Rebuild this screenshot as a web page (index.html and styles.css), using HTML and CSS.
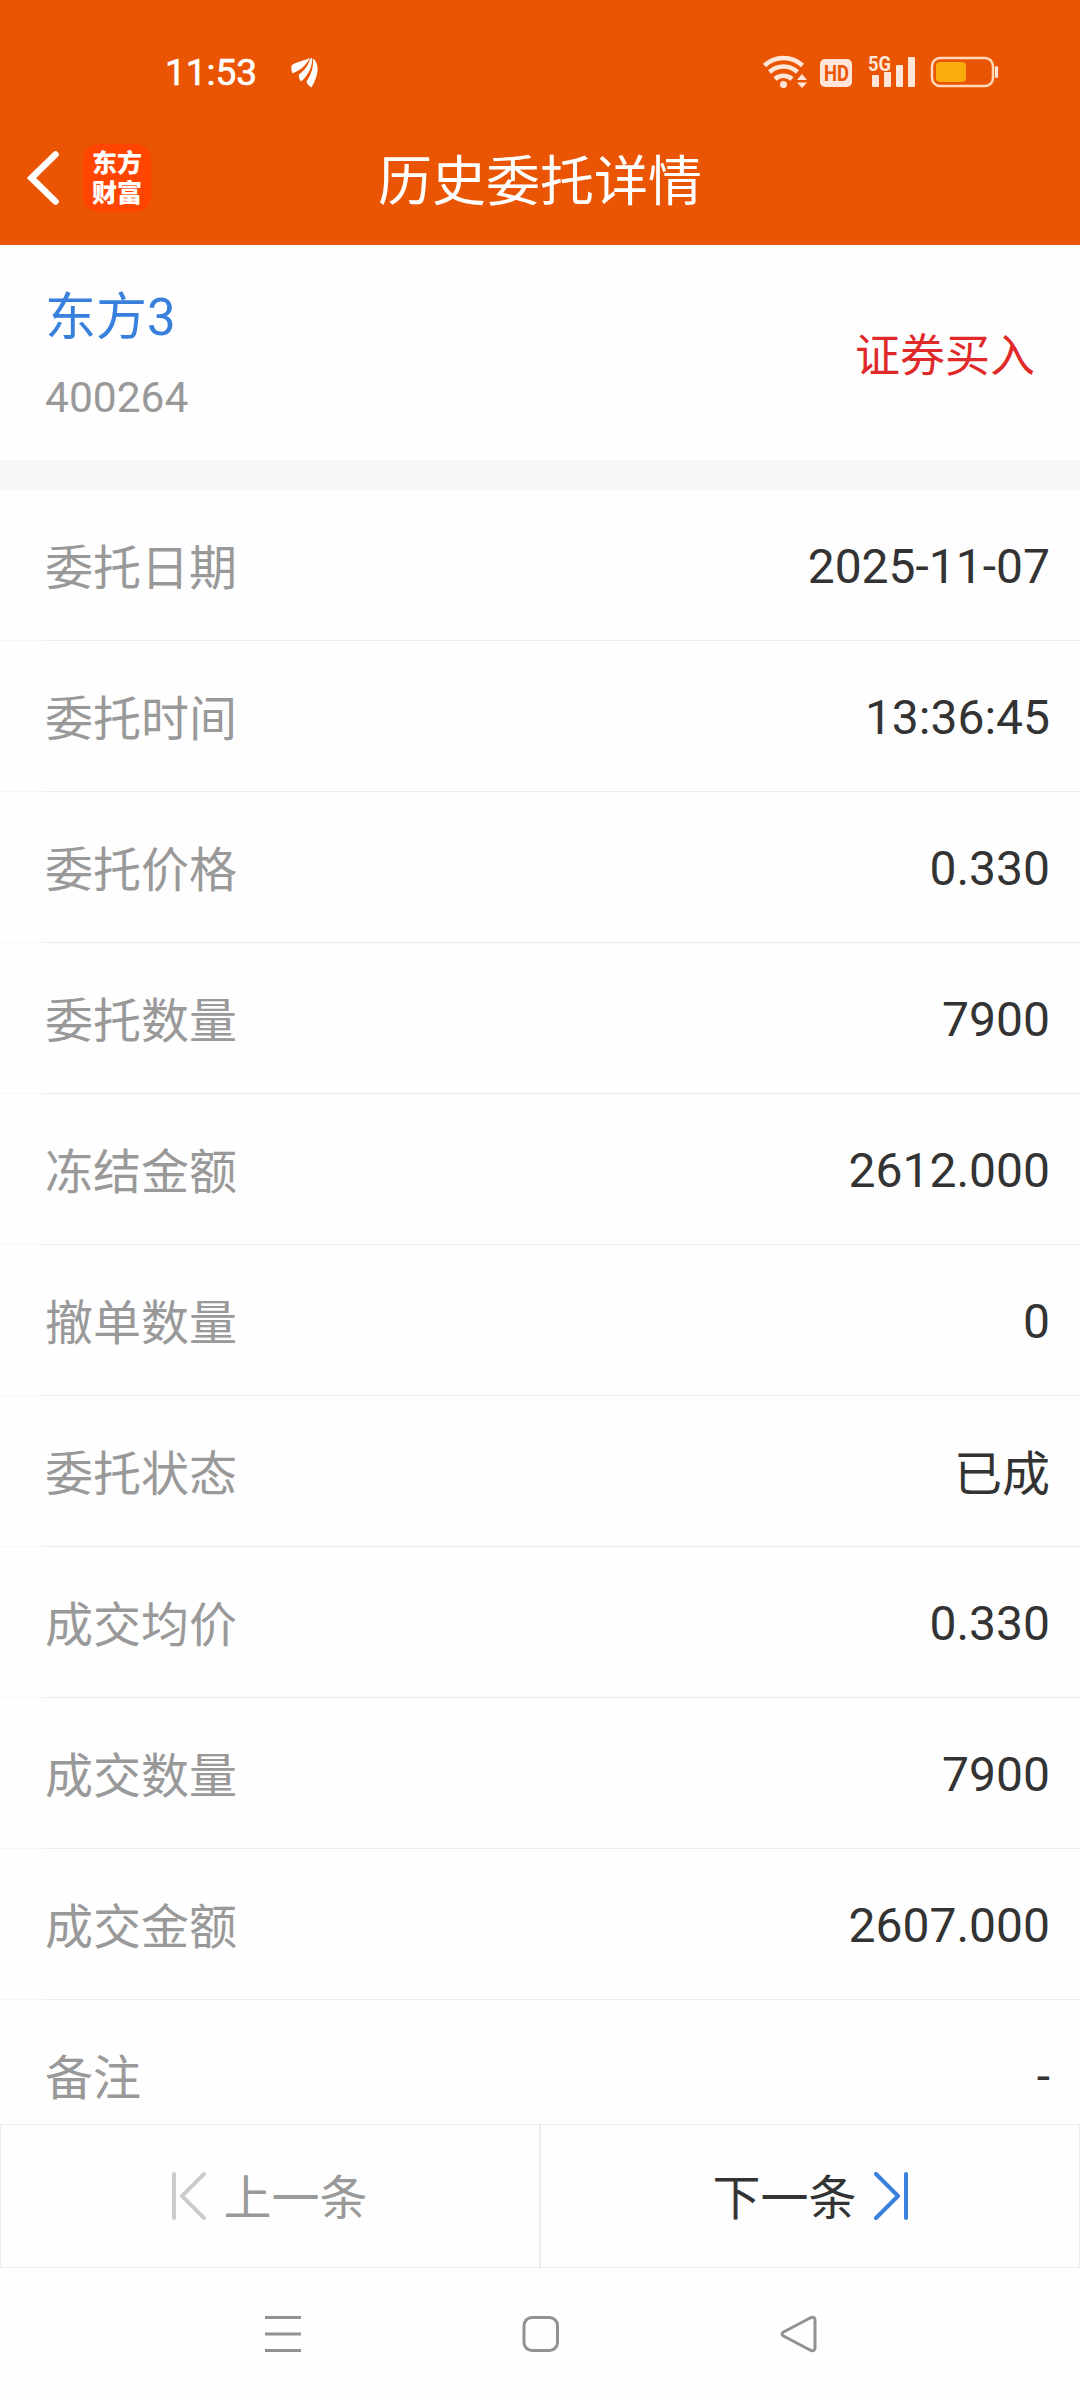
FILE: index.html
```html
<!DOCTYPE html>
<html lang="zh-CN">
<head>
    <meta charset="UTF-8">
    <meta name="viewport" content="width=device-width, initial-scale=1.0">
    <title>历史委托详情</title>
    <link rel="stylesheet" href="styles.css">
</head>
<body>
    <div class="header">
        <div class="status-bar">
            <span class="time">11:53</span>
            <svg class="notice" width="28" height="32" viewBox="0 0 28 32" fill="#fff">
                <path d="M0.500 8.500C5 5 11 4.500 17.500 1.500C18.500 1 19 1.300 18.500 2C15 8 10 13 1.500 16.500C0.500 14 0 11 0.500 8.500Z"/>
                <path d="M19.300 1.500L20.800 1C22 8 18 18 10 24.500C8 22 7.300 19.500 8 17.500C14 13 17.500 8 19.300 1.500Z"/>
                <path d="M21.800 1.500C26.500 4.500 27.500 11 26 17C25 22 22.500 26.500 20.500 30.500C18 29 16 27 15.500 24.500C20 18 23 10 21.800 1.500Z"/>
            </svg>
            <svg class="signals" width="236" height="48" viewBox="0 -5 236 48">
                <g fill="none" stroke="#ffe6d9" stroke-width="4.500">
                    <path d="M1.500 11.500A28 28 0 0 1 39.500 11.500"/>
                    <path d="M6.500 18A20.500 20.500 0 0 1 34.500 18"/>
                    <path d="M12 25A13 13 0 0 1 29 25"/>
                </g>
                <g fill="#ffe6d9">
                    <circle cx="20.500" cy="30.500" r="3.500"/>
                    <path d="M39 20L44 26H34ZM39 34L44 28.500H34Z"/>
                    <rect x="57" y="5" width="32" height="28" rx="5"/>
                    <rect x="109" y="21" width="7" height="12" rx="1"/>
                    <rect x="121" y="18" width="7" height="15" rx="1"/>
                    <rect x="133" y="11" width="7" height="22" rx="1"/>
                    <rect x="145" y="3" width="7" height="30" rx="1"/>
                    <rect x="232" y="12" width="3" height="12" rx="1.500"/>
                </g>
                <text class="hd" x="61" y="27" textLength="25" lengthAdjust="spacingAndGlyphs">HD</text>
                <text class="net" x="105" y="16.500" textLength="23" lengthAdjust="spacingAndGlyphs">5G</text>
                <rect x="169" y="4" width="61" height="28" rx="8" fill="none" stroke="#ffd9b8" stroke-width="2.500"/>
                <rect x="173" y="8" width="30" height="20" rx="4" fill="#fbab0c"/>
            </svg>
        </div>
        <div class="title-bar">
            <div class="left">
                <svg width="34" height="56" viewBox="0 0 34 56" fill="none" stroke="#fff" stroke-width="6.500" stroke-linecap="round">
                    <path d="M28.500 4.500L4.500 28L28.500 51.500"/>
                </svg>
                <div class="logo"><span>东方</span><span>财富</span></div>
            </div>
            <h1>历史委托详情</h1>
        </div>
    </div>

    <div class="summary">
        <div class="stock">
            <div class="name">东方3</div>
            <div class="code">400264</div>
        </div>
        <div class="side">证券买入</div>
    </div>

    <div class="list">
        <div class="row"><span class="cn label">委托日期</span><span>2025-11-07</span></div>
        <div class="row"><span class="cn label">委托时间</span><span>13:36:45</span></div>
        <div class="row"><span class="cn label">委托价格</span><span>0.330</span></div>
        <div class="row"><span class="cn label">委托数量</span><span>7900</span></div>
        <div class="row"><span class="cn label">冻结金额</span><span>2612.000</span></div>
        <div class="row"><span class="cn label">撤单数量</span><span>0</span></div>
        <div class="row"><span class="cn label">委托状态</span><span class="cn">已成</span></div>
        <div class="row"><span class="cn label">成交均价</span><span>0.330</span></div>
        <div class="row"><span class="cn label">成交数量</span><span>7900</span></div>
        <div class="row"><span class="cn label">成交金额</span><span>2607.000</span></div>
        <div class="row"><span class="cn label">备注</span><span>-</span></div>
    </div>

    <div class="pager">
        <div class="page prev">
            <svg width="34" height="48" viewBox="0 0 34 48">
                <path d="M2 2V46M32 2L10 24L32 46"/>
            </svg>
            <span>上一条</span>
        </div>
        <div class="page next">
            <span>下一条</span>
            <svg width="34" height="48" viewBox="0 0 34 48">
                <path d="M32 2V46M2 2L24 24L2 46"/>
            </svg>
        </div>
    </div>

    <div class="nav">
        <svg width="40" height="40" viewBox="0 0 40 40">
            <path d="M2 3.500H38M2 20H38M2 36.500H38"/>
        </svg>
        <svg width="40" height="40" viewBox="0 0 40 40">
            <rect x="3" y="3.500" width="33.500" height="33" rx="8"/>
        </svg>
        <svg width="40" height="40" viewBox="0 0 40 40">
            <path d="M4.500 18L31 4Q36 2 36 6V34Q36 38 31 36L4.500 22Q1.500 20 4.500 18Z"/>
        </svg>
    </div>
</body>
</html>
```
FILE: styles.css
```css
* {
    box-sizing: border-box;
}
body {
    margin: 0;
    width: 1080px;
    height: 2400px;
    display: flex;
    flex-direction: column;
    overflow: hidden;
    background: #fefefe;
    color: #333;
    font-family: Roboto, "Noto Sans CJK SC", sans-serif;
    font-size: 48px;
}
svg {
    display: block;
    flex: none;
}
.header {
    height: 245px;
    flex: none;
    background: #ea5504;
    color: #fff;
}
.status-bar {
    height: 116px;
    padding: 30px 81px 0 165px;
    display: flex;
    align-items: center;
}
.time {
    width: 126px;
    font-size: 37px;
    line-height: 40px;
    -webkit-text-stroke: 0.6px #fff;
}
.signals {
    margin-left: auto;
}
.hd, .net {
    font-family: Roboto, sans-serif;
}
.hd {
    font-size: 22px;
    font-weight: 700;
    fill: #ea5504;
}
.net {
    font-size: 21px;
    font-weight: 700;
    fill: #ffe6d9;
}
.title-bar {
    height: 129px;
    display: grid;
    grid-template-columns: 1fr auto 1fr;
    align-items: center;
}
.left {
    display: flex;
    align-items: center;
    gap: 22px;
    padding-left: 27px;
    padding-bottom: 6px;
}
.logo {
    width: 68px;
    height: 68px;
    padding-top: 2px;
    display: flex;
    flex-direction: column;
    align-items: center;
    border-radius: 15px;
    background: #ff4500;
    font-family: "Noto Sans CJK SC", sans-serif;
    font-size: 25px;
    font-weight: 900;
    line-height: 30px;
}
h1 {
    margin: 0;
    padding-top: 4px;
    font-size: 54px;
    font-weight: 400;
    line-height: 64px;
}
.summary {
    height: 245px;
    flex: none;
    padding: 0 45px;
    display: flex;
    justify-content: space-between;
    align-items: center;
    border-bottom: 30px solid #f6f7f9;
}
.stock {
    padding-top: 11px;
}
.name {
    color: #3880dc;
    font-size: 51px;
    line-height: 80px;
}
.code {
    color: #999;
    font-size: 42.5px;
    line-height: 80px;
}
.side {
    color: #e02a2a;
    font-size: 45px;
}
.list {
    height: 1634px;
    flex: none;
    overflow: hidden;
}
.row {
    height: 151px;
    padding: 2px 30px 0 45px;
    display: flex;
    justify-content: space-between;
    align-items: center;
    border-bottom: 1px solid #ececec;
    border-image: linear-gradient(to right, #f7f7f7 45px, #ececec 45px) 1;
}
.cn {
    padding-bottom: 5px;
}
.label {
    color: #999;
}
.pager {
    height: 144px;
    flex: none;
    display: flex;
}
.page {
    flex: 1;
    display: flex;
    justify-content: center;
    align-items: center;
    gap: 17px;
    border: 1px solid #ececec;
}
.page span {
    padding-bottom: 4px;
}
.page svg {
    fill: none;
    stroke-width: 4;
    stroke-linecap: round;
    stroke-linejoin: round;
}
.prev {
    color: #999;
}
.prev svg {
    stroke: #ccc;
}
.next svg {
    stroke: #3880dc;
}
.nav {
    flex: 1;
    padding: 0 261px 0 263px;
    display: flex;
    justify-content: space-between;
    align-items: center;
}
.nav svg {
    fill: none;
    stroke: #929292;
    stroke-width: 3;
}
```
